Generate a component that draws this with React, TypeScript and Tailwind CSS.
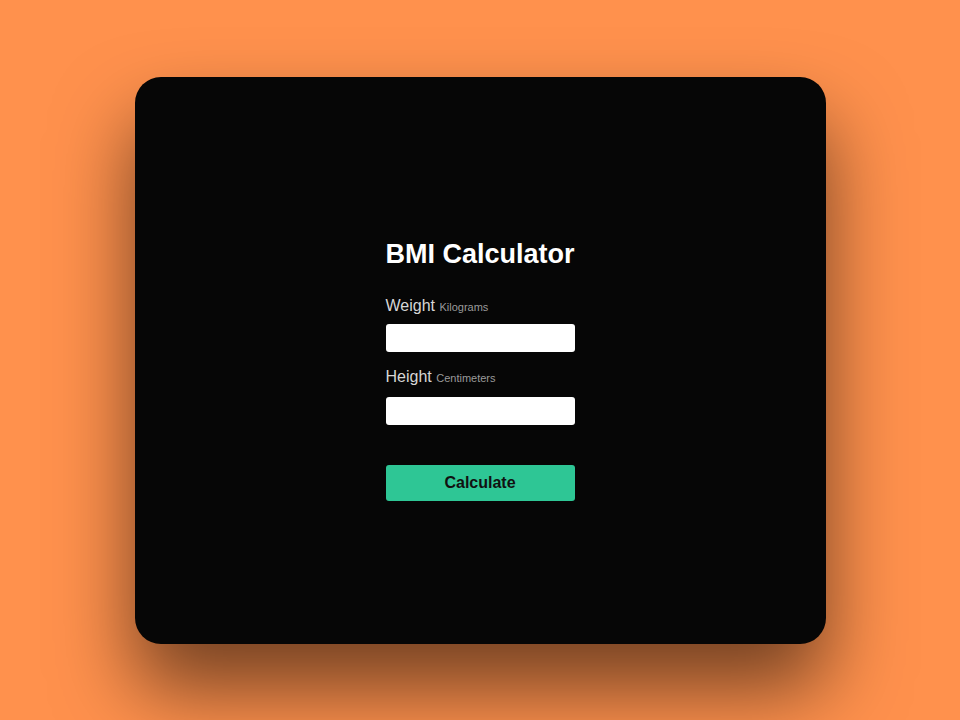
export default function App() {
  return (
    <div
      className="flex h-[720px] w-full items-center justify-center bg-[#ff914d]"
      style={{ fontFamily: '"Liberation Sans", Arial, sans-serif' }}
    >
      <div className="flex h-[567px] w-[691px] items-center justify-center rounded-[26px] bg-[#060606] shadow-[0_45px_80px_rgba(0,0,0,0.55)]">
        <form className="mt-[20px] flex w-[189px] flex-col" onSubmit={(e) => e.preventDefault()}>
          <h1 className="whitespace-nowrap text-[27px] font-bold leading-[31px] text-white">BMI Calculator</h1>

          {/* Weight */}
          <label className="mt-[26px] whitespace-nowrap text-[16px] leading-[20px] text-[#d6d6d6]">
            Weight <span className="text-[11px] text-[#9a9a9a]">Kilograms</span>
          </label>
          <input type="text" className="mt-[7px] h-[28px] w-full rounded-[3px] bg-white px-2 text-black outline-none" />

          {/* Height */}
          <label className="mt-[15px] whitespace-nowrap text-[16px] leading-[20px] text-[#d6d6d6]">
            Height <span className="text-[11px] text-[#9a9a9a]">Centimeters</span>
          </label>
          <input type="text" className="mt-[9px] h-[28px] w-full rounded-[3px] bg-white px-2 text-black outline-none" />

          <button
            type="submit"
            className="mt-[40px] h-[36px] w-full rounded-[3px] bg-[#2ec695] text-[16px] font-bold text-[#111]"
          >
            Calculate
          </button>
        </form>
      </div>
    </div>
  );
}
